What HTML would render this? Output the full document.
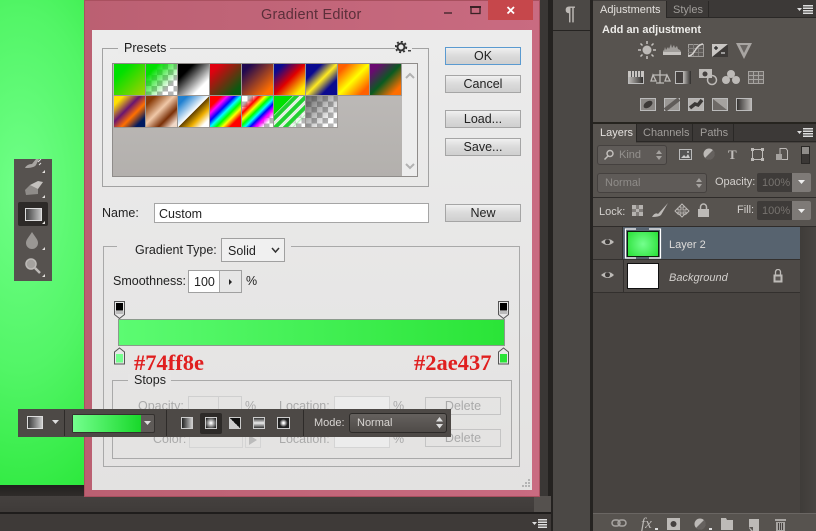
<!DOCTYPE html>
<html><head><meta charset="utf-8">
<style>
html,body{margin:0;padding:0;width:816px;height:531px;overflow:hidden;background:#45413f}
body{position:relative;font-family:"Liberation Sans",sans-serif;font-size:12px}
div,span.a{position:absolute;box-sizing:border-box}
.t{position:absolute;white-space:nowrap;line-height:14px}
.d{color:#222;font-size:12.5px}
.g{color:#aaa;font-size:12.5px}
.btn{background:linear-gradient(#f0f0f0,#dcdcdc 45%,#cfcfcf);border:1px solid #a5a5a5;color:#222;text-align:center;font-size:12.5px;line-height:16px}
.s{width:32px;height:32px;border-right:1px solid #9b9794;border-bottom:1px solid #9b9794}
.ck{background-image:repeating-conic-gradient(#b4b4b4 0 25%,#fff 0 50%);background-size:11px 11px}
.l{color:#a3a09c;font-size:11px}
</style></head><body>

<!-- canvas -->
<div style="left:0;top:0;width:84px;height:485px;background:radial-gradient(ellipse 150px 330px at 20px 190px,#70ff88 0%,#52f566 55%,#2ce83c 100%)"></div>
<div style="left:0;top:485px;width:551px;height:11px;background:linear-gradient(#211f1d,#2f2c2a)"></div>
<div style="left:0;top:496px;width:551px;height:17px;background:linear-gradient(#45413f,#3f3b39)"></div>
<div style="left:0;top:512px;width:551px;height:2px;background:#1f1d1c"></div>
<div style="left:0;top:514px;width:551px;height:17px;background:#3e3a38"></div>
<svg style="position:absolute;left:532px;top:519px" width="15" height="9" fill="#ddd"><path d="M0 3h5L2.500 6zM6 0h9v1.500H6zM6 2.500h9V4H6zM6 5h9v1.500H6zM6 7.500h9V9H6z"/></svg>

<!-- right-of-dialog strips -->
<div style="left:540px;top:0;width:8px;height:497px;background:#3a3735"></div>
<div style="left:534px;top:496px;width:17px;height:16px;background:#55514e"></div>
<div style="left:548px;top:0;width:5px;height:496px;background:#242220"></div>
<div style="left:551px;top:496px;width:2px;height:35px;background:#242220"></div>
<div style="left:553px;top:0;width:37px;height:531px;background:#4b4845"></div>
<div style="left:553px;top:30px;width:37px;height:1px;background:#262422"></div>
<div style="left:590px;top:0;width:3px;height:531px;background:#252321"></div>
<span class="t" style="left:565px;top:5px;font-size:19px;line-height:20px;color:#bdb9b5;font-weight:bold">¶</span>

<!-- dialog -->
<div style="left:84px;top:0;width:456px;height:497px;background:linear-gradient(90deg,#bb6072,#c96b81);box-shadow:inset 0 0 0 1px #a9505f"></div>
<div style="left:488px;top:0;width:45px;height:20px;background:#c6474b"></div>
<svg style="position:absolute;left:440px;top:0" width="92" height="20"><rect x="4" y="12" width="8" height="2" fill="#6b3a45"/><rect x="31" y="7" width="9" height="6.500" fill="none" stroke="#3a2226" stroke-width="1.300"/><rect x="30" y="6" width="11" height="2" fill="#3a2226"/><path d="M67.500 7l6.500 6.500m0-6.500l-6.500 6.500" stroke="#fff" stroke-width="1.800"/></svg>
<span class="t" style="left:261px;top:8px;font-size:14.5px;color:#5b2f3a;letter-spacing:.2px">Gradient Editor</span>
<div style="left:92px;top:30px;width:440px;height:460px;background:linear-gradient(#ececec,#e3e2e1)"></div>
<svg style="position:absolute;left:520px;top:478px" width="12" height="12" fill="#b4b4b4"><rect x="8" y="1" width="2" height="2"/><rect x="5" y="4" width="2" height="2"/><rect x="8" y="4" width="2" height="2"/><rect x="2" y="7" width="2" height="2"/><rect x="5" y="7" width="2" height="2"/><rect x="8" y="7" width="2" height="2"/></svg>

<!-- presets group -->
<div style="left:102px;top:48px;width:327px;height:139px;border:1px solid #a2a2a2"></div>
<div style="left:118px;top:42px;width:52px;height:12px;background:#ebebeb"></div>
<div style="left:395px;top:42px;width:17px;height:12px;background:#ebebeb"></div>
<span class="t d" style="left:124px;top:41px;color:#1a1a1a">Presets</span>
<svg style="position:absolute;left:395px;top:41px" width="18" height="13"><circle cx="6" cy="6" r="3.500" fill="none" stroke="#333" stroke-width="2"/><circle cx="6" cy="6" r="5.300" fill="none" stroke="#333" stroke-width="1.800" stroke-dasharray="2 2.100"/><rect x="13" y="9" width="3" height="1.500" fill="#444"/></svg>
<div style="left:112px;top:63px;width:306px;height:114px;border:1px solid #8f8c8a;background:#ededed"></div>
<div style="left:113px;top:64px;width:289px;height:112px;background:linear-gradient(#bfbcba,#b3b0ad)"></div>
<svg style="position:absolute;left:402px;top:64px" width="16" height="112" fill="none" stroke="#b2b2b2" stroke-width="2"><path d="M4 14l4-4 4 4M4 100l4 4 4-4"/></svg>

<div class="s" style="left:114px;top:64px;background:linear-gradient(135deg,#00e000 25%,#a8d000)"></div>
<div class="s ck" style="left:146px;top:64px"><div style="inset:0;background:linear-gradient(135deg,#00e000 20%,rgba(0,224,0,0) 75%)"></div></div>
<div class="s" style="left:178px;top:64px;background:linear-gradient(135deg,#000 25%,#fff 75%)"></div>
<div class="s" style="left:210px;top:64px;background:linear-gradient(135deg,#e00010 15%,#0a5a10 85%)"></div>
<div class="s" style="left:242px;top:64px;background:linear-gradient(135deg,#200850 15%,#ff6e00 85%)"></div>
<div class="s" style="left:274px;top:64px;background:linear-gradient(135deg,#0a0a90 15%,#e00000 50%,#ffea00 85%)"></div>
<div class="s" style="left:306px;top:64px;background:linear-gradient(135deg,#0a0a90 25%,#ffea20 50%,#0a0a90 75%)"></div>
<div class="s" style="left:338px;top:64px;background:linear-gradient(135deg,#ff6000 15%,#ffff00 50%,#ff6000 85%)"></div>
<div class="s" style="left:370px;top:64px;background:linear-gradient(135deg,#6a0a70 15%,#0a5a20 50%,#ff6e00 85%)"></div>

<div class="s" style="left:114px;top:96px;background:linear-gradient(135deg,#ffe000 15%,#6a1570 42%,#ff7000 62%,#001a60 85%)"></div>
<div class="s" style="left:146px;top:96px;background:linear-gradient(135deg,#8a3c08 15%,#f0c8a8 45%,#7a3008 70%,#f0d8c8 90%)"></div>
<div class="s" style="left:178px;top:96px;background:linear-gradient(135deg,#2080d0 15%,#fff 50%,#604000 51%,#f0b000 70%,#fff 88%)"></div>
<div class="s" style="left:210px;top:96px;background:linear-gradient(135deg,#f00 18%,#f0f 28%,#00f 40%,#0ff 50%,#0f0 60%,#ff0 70%,#f00 82%)"></div>
<div class="s ck" style="left:242px;top:96px"><div style="inset:0;background:linear-gradient(135deg,rgba(255,0,0,0) 15%,#f00 28%,#ff0 38%,#0f0 47%,#0ff 55%,#00f 63%,#f0f 72%,rgba(255,0,255,0) 85%)"></div></div>
<div class="s ck" style="left:274px;top:96px"><div style="inset:0;background:repeating-linear-gradient(135deg,#20d030 0 4px,#e0f0e0 4px 7px);-webkit-mask-image:linear-gradient(135deg,#000 70%,transparent 85%)"></div><div style="inset:0;background:linear-gradient(135deg,#00e000 30%,rgba(0,224,0,0) 31%)"></div></div>
<div class="s ck" style="left:306px;top:96px"><div style="inset:0;background:linear-gradient(135deg,rgba(70,70,70,.85),rgba(70,70,70,0) 80%)"></div></div>

<!-- buttons -->
<div class="btn" style="left:445px;top:47px;width:76px;height:18px;border-color:#5a9ad0">OK</div>
<div class="btn" style="left:445px;top:75px;width:76px;height:18px">Cancel</div>
<div class="btn" style="left:445px;top:110px;width:76px;height:18px">Load...</div>
<div class="btn" style="left:445px;top:138px;width:76px;height:18px">Save...</div>
<div class="btn" style="left:445px;top:204px;width:76px;height:18px">New</div>

<!-- name -->
<span class="t d" style="left:102px;top:206px">Name:</span>
<div style="left:154px;top:203px;width:275px;height:20px;background:#fff;border:1px solid #a5a5a5"></div>
<span class="t d" style="left:159px;top:207px">Custom</span>

<!-- gradient type group -->
<div style="left:103px;top:246px;width:417px;height:221px;border:1px solid #a9a9a9"></div>
<div style="left:117px;top:240px;width:174px;height:14px;background:#e8e7e7"></div>
<span class="t d" style="left:135px;top:243px">Gradient Type:</span>
<div style="left:221px;top:238px;width:64px;height:24px;background:#f0f0f0;border:1px solid #a0a0a0"></div>
<span class="t d" style="left:228px;top:244px">Solid</span>
<svg style="position:absolute;left:271px;top:247px" width="10" height="7" fill="none" stroke="#333" stroke-width="1.500"><path d="M1 1l3.500 4 3.500-4"/></svg>
<span class="t d" style="left:113px;top:274px">Smoothness:</span>
<div style="left:188px;top:270px;width:54px;height:23px;background:#fff;border:1px solid #a0a0a0"></div>
<div style="left:219px;top:271px;width:22px;height:21px;background:#e6e6e6;border-left:1px solid #a8a8a8"></div>
<span class="t d" style="left:194px;top:275px">100</span>
<svg style="position:absolute;left:228px;top:278px" width="6" height="8"><path d="M1 1l3 3-3 3z" fill="#222"/></svg>
<span class="t d" style="left:246px;top:274px">%</span>

<!-- gradient bar -->
<div style="left:118px;top:319px;width:387px;height:27px;background:linear-gradient(90deg,#5cfb72,#2ae437);border:1px solid #8b9a8c"></div>
<svg style="position:absolute;left:114px;top:301px" width="12" height="19"><path d="M.5.5h10v13l-5 4-5-4z" fill="#e8e8e8" stroke="#555"/><rect x="2" y="2" width="7" height="7.500" fill="#000"/><rect x="1.500" y="10" width="8" height="3" fill="#bbb"/></svg>
<svg style="position:absolute;left:498px;top:301px" width="12" height="19"><path d="M.5.5h10v13l-5 4-5-4z" fill="#e8e8e8" stroke="#555"/><rect x="2" y="2" width="7" height="7.500" fill="#000"/><rect x="1.500" y="10" width="8" height="3" fill="#bbb"/></svg>
<svg style="position:absolute;left:114px;top:347px" width="12" height="18"><path d="M.5 17V5l5-4 5 4v12z" fill="#e8e8e8" stroke="#555"/><rect x="2" y="7" width="7" height="8.500" fill="#74ff8e"/></svg>
<svg style="position:absolute;left:498px;top:347px" width="12" height="18"><path d="M.5 17V5l5-4 5 4v12z" fill="#e8e8e8" stroke="#555"/><rect x="2" y="7" width="7" height="8.500" fill="#2ae437"/></svg>

<!-- stops -->
<div style="left:112px;top:380px;width:400px;height:79px;border:1px solid #a9a9a9"></div>
<div style="left:128px;top:374px;width:43px;height:12px;background:#e6e5e5"></div>
<span class="t d" style="left:134px;top:373px">Stops</span>
<span class="t g" style="left:138px;top:399px">Opacity:</span>
<div style="left:188px;top:396px;width:54px;height:22px;border:1px solid #cfcfcf"></div>
<div style="left:218px;top:396px;width:1px;height:22px;background:#d0d0d0"></div>
<span class="t g" style="left:245px;top:399px">%</span>
<span class="t g" style="left:279px;top:399px">Location:</span>
<div style="left:334px;top:396px;width:56px;height:20px;border:1px solid #d4d4d4;background:#ececec"></div>
<span class="t g" style="left:393px;top:399px">%</span>
<div style="left:425px;top:397px;width:76px;height:18px;border:1px solid #c4c4c4;color:#aaa;text-align:center;font-size:12.5px;line-height:17px">Delete</div>
<span class="t g" style="left:153px;top:432px">Color:</span>
<div style="left:189px;top:428px;width:54px;height:20px;border:1px solid #d4d4d4"></div>
<div style="left:245px;top:428px;width:16px;height:20px;border:1px solid #d4d4d4"></div>
<svg style="position:absolute;left:248px;top:434px" width="10" height="12"><path d="M1 1l8 5-8 5z" fill="#bbb"/></svg>
<span class="t g" style="left:279px;top:432px">Location:</span>
<div style="left:334px;top:428px;width:56px;height:20px;border:1px solid #d4d4d4;background:#ececec"></div>
<span class="t g" style="left:393px;top:432px">%</span>
<div style="left:425px;top:429px;width:76px;height:18px;border:1px solid #c4c4c4;color:#aaa;text-align:center;font-size:12.5px;line-height:17px">Delete</div>

<!-- red labels -->
<span class="t" style="left:134px;top:350px;font:bold 22.5px/26px 'Liberation Serif',serif;color:#e01f1f">#74ff8e</span>
<span class="t" style="left:414px;top:350px;font:bold 22.5px/26px 'Liberation Serif',serif;color:#e01f1f">#2ae437</span>

<!-- left tools -->
<div style="left:14px;top:159px;width:38px;height:122px;background:#56524f"></div>
<div style="left:18px;top:202px;width:30px;height:24px;background:#2d2a28;border-radius:2px"></div>
<svg style="position:absolute;left:14px;top:159px" width="38" height="122">
<defs><linearGradient id="lg" x1="0" x2="1"><stop offset="0" stop-color="#3a3a3a"/><stop offset="1" stop-color="#c8c8c8"/></linearGradient></defs>
<path d="M11 9q2-4 7-4l4-5h3l-3 6q-2 3-11 3z" fill="#a8a5a2"/><path d="M24 3l3-3M25 6l2-2" stroke="#ddd"/>
<path d="M16 26l8-4 5 1-5 7-8 1z" fill="#c4c1be"/>
<path d="M11 31l5-5 8 4v5l-12 1z" fill="#8f8c89"/>
<rect x="11.500" y="49.500" width="16" height="12" fill="url(#lg)" stroke="#ddd" stroke-width="1"/>
<path d="M18 73c-4 6-6 8-6 11a6 6 0 0 0 12 0c0-3-2-5-6-11z" fill="#9a9794"/>
<circle cx="17" cy="105" r="5" fill="#a5a29f" stroke="#bdbab7" stroke-width="1.500"/><path d="M21 109l5 5" stroke="#bdbab7" stroke-width="2.500"/>
<g fill="#e4e2df"><path d="M31 11v3h-3zM31 36v3h-3zM31 62v3h-3zM31 88v3h-3zM31 115v3h-3z"/></g>
</svg>

<!-- options bar -->
<div style="left:18px;top:409px;width:433px;height:28px;background:#4d4946"></div>
<div style="left:64px;top:410px;width:1px;height:26px;background:#2e2b29"></div>
<div style="left:166px;top:410px;width:1px;height:26px;background:#2e2b29"></div>
<div style="left:303px;top:410px;width:1px;height:26px;background:#2e2b29"></div>
<div style="left:27px;top:416px;width:16px;height:13px;background:linear-gradient(90deg,#3a3a3a,#ccc);border:1px solid #ddd"></div>
<svg style="position:absolute;left:52px;top:420px" width="8" height="5"><path d="M0 0h7l-3.500 4z" fill="#ddd"/></svg>
<div style="left:72px;top:414px;width:83px;height:19px;background:#5e5a57;border:1px solid #34312f;border-radius:2px"></div>
<div style="left:73px;top:415px;width:68px;height:17px;background:linear-gradient(90deg,#74ff8e,#18d82a)"></div>
<svg style="position:absolute;left:144px;top:421px" width="8" height="5"><path d="M0 0h7l-3.500 4z" fill="#ddd"/></svg>
<div style="left:200px;top:413px;width:22px;height:21px;background:#2d2a28;border-radius:2px"></div>
<div style="left:181px;top:417px;width:12px;height:12px;background:linear-gradient(90deg,#222,#ccc);border:1px solid #ccc"></div>
<div style="left:205px;top:417px;width:12px;height:12px;background:radial-gradient(circle,#fff 5%,#222 90%);border:1px solid #ccc"></div>
<div style="left:229px;top:417px;width:12px;height:12px;background:linear-gradient(45deg,#ccc 50%,#111 50%);border:1px solid #ccc"></div>
<div style="left:253px;top:417px;width:12px;height:12px;background:linear-gradient(#333,#eee 50%,#333);border:1px solid #ccc"></div>
<div style="left:277px;top:417px;width:13px;height:12px;background:radial-gradient(circle,#fff 10%,#222 55%);border:1px solid #ccc"></div>
<span class="t" style="left:314px;top:416px;color:#d8d5d2;font-size:11px">Mode:</span>
<div style="left:349px;top:413px;width:98px;height:20px;background:linear-gradient(#65615e,#4f4b48);border:1px solid #2c2a28;border-radius:3px"></div>
<span class="t" style="left:357px;top:416px;color:#d8d5d2;font-size:11px">Normal</span>
<svg style="position:absolute;left:436px;top:417px" width="8" height="12" fill="#ddd"><path d="M0 4.500L3.500 0 7 4.500zM0 7h7l-3.500 4.500z"/></svg>

<!-- right panels -->
<div style="left:593px;top:0;width:223px;height:122px;background:#57534f"></div>
<div style="left:593px;top:0;width:223px;height:18px;background:#3c3937;border-bottom:1px solid #2a2826"></div>
<div style="left:593px;top:1px;width:73px;height:18px;background:#57534f"></div>
<div style="left:666px;top:1px;width:1px;height:17px;background:#2a2826"></div>
<div style="left:708px;top:1px;width:1px;height:17px;background:#2a2826"></div>
<span class="t" style="left:600px;top:3px;font-size:11px;color:#e4e1de">Adjustments</span>
<span class="t" style="left:673px;top:3px;font-size:11px;color:#a09d9a">Styles</span>
<svg style="position:absolute;left:797px;top:5px" width="16" height="9" fill="#ddd"><path d="M0 3h5L2.500 6zM6 0h10v1.500H6zM6 2.500h10V4H6zM6 5h10v1.500H6zM6 7.500h10V9H6z"/></svg>
<span class="t" style="left:602px;top:23px;font-size:11px;color:#ecebe8;font-weight:bold">Add an adjustment</span>

<svg style="position:absolute;left:593px;top:0" width="223" height="122">
<defs><linearGradient id="gg" x1="0" x2="1"><stop offset="0" stop-color="#2f2d2b"/><stop offset="1" stop-color="#bdbab7"/></linearGradient>
<linearGradient id="gr" x1="0" x2="1"><stop offset="0" stop-color="#bdbab7"/><stop offset="1" stop-color="#2f2d2b"/></linearGradient></defs>
<!-- row1 -->
<g transform="translate(54,50)"><circle r="4.500" fill="#bdbab7"/><path d="M0-9v3M0 6v3M-9 0h3M6 0h3M-6.500-6.500l2 2M4.500 4.500l2 2M6.500-6.500l-2 2M-4.500 4.500l-2 2" stroke="#c5c2bf" stroke-width="1.500"/></g>
<path d="M70 55v-5l1 1 1-4 1 3 2-3 1 2 2-5 1 4 2-3 1 3 2-2 1 3 2 1 1 2v3z" fill="#a09d9a"/><rect x="70" y="52" width="18" height="3" fill="#c5c2bf"/>
<g transform="translate(95,44)"><rect x=".5" y=".5" width="15" height="12" fill="#5f5b58" stroke="#a09d9a"/><path d="M5.500 0v12M10.500 0v12M0 4.500h15M0 8.500h15" stroke="#807d7a"/><path d="M0 12c7 0 7-11 15-12" stroke="#d5d2cf" fill="none" stroke-width="1.500"/></g>
<g transform="translate(119,44)"><rect width="16" height="13" fill="#c9c6c3"/><path d="M0 13L16 0v13z" fill="#3c3937"/><path d="M2 4h4M4 2v4" stroke="#222" stroke-width="1.200"/><path d="M9 9h4" stroke="#ddd" stroke-width="1.200"/></g>
<path d="M143 43h16l-8 16z" fill="#a8a5a2"/><path d="M147 45h8l-4 8z" fill="#6a6663"/>
<!-- row2 -->
<g transform="translate(35,71)"><rect x=".5" y=".5" width="15" height="12" fill="url(#gr)" stroke="#bbb"/><rect y="0" width="16" height="6" fill="#c8c5c2"/><path d="M3.500 0v6M6.500 0v6M9.500 0v6M12.500 0v6" stroke="#555"/></g>
<g transform="translate(60,70)" fill="none" stroke="#bdbab7" stroke-width="1.300"><path d="M7 0v13M0 5h14M0 5l-2 6h5zM14 5l-2 6h5zM3 13h8"/></g>
<g transform="translate(82,71)"><rect x=".5" y=".5" width="15" height="12" fill="#45413f" stroke="#bbb"/><rect x="8" width="8" height="13" fill="url(#gr)"/></g>
<g transform="translate(106,69)"><rect width="13" height="9" fill="#bdbab7"/><circle cx="6" cy="5" r="2.500" fill="#45413f"/><circle cx="13" cy="11" r="4.500" fill="none" stroke="#bdbab7" stroke-width="1.500"/></g>
<g transform="translate(138,77)" fill="#bdbab7"><circle cy="-3" r="4"/><circle cx="-5" cy="3" r="4"/><circle cx="5" cy="3" r="4"/></g>
<g transform="translate(155,71)"><rect x=".5" y=".5" width="15" height="12" fill="#6a6663" stroke="#a5a29f"/><path d="M5.500 0v12M10.500 0v12M0 4.500h15M0 8.500h15" stroke="#a5a29f"/></g>
<!-- row3 -->
<g transform="translate(47,98)"><rect x=".5" y=".5" width="15" height="12" fill="#8a8784" stroke="#bbb"/><ellipse cx="8" cy="6.500" rx="5" ry="3" fill="#3c3937" transform="rotate(-35 8 6.500)"/></g>
<g transform="translate(71,98)"><rect x=".5" y=".5" width="15" height="12" fill="#9a9794" stroke="#bbb"/><path d="M1 12L15 1" stroke="#605c59" stroke-width="4"/></g>
<g transform="translate(95,98)"><rect x=".5" y=".5" width="15" height="12" fill="#b5b2af" stroke="#bbb"/><path d="M2 10l5-4 3 1 4-5" stroke="#3c3937" stroke-width="3.500" fill="none"/></g>
<g transform="translate(119,98)"><rect x=".5" y=".5" width="15" height="12" fill="#a5a29f" stroke="#bbb"/><path d="M1 1l14 11H1zM15 1L1 12" fill="#6d6966"/></g>
<rect x="143.500" y="98.500" width="15" height="12" fill="url(#gg)" stroke="#bbb"/>
</svg>

<div style="left:593px;top:122px;width:223px;height:2px;background:#26241f"></div>
<div style="left:593px;top:124px;width:223px;height:389px;background:#474340"></div>
<div style="left:593px;top:124px;width:223px;height:18px;background:#3c3937;border-bottom:1px solid #2a2826"></div>
<div style="left:593px;top:124px;width:43px;height:19px;background:#57534f"></div>
<div style="left:636px;top:124px;width:1px;height:18px;background:#2a2826"></div>
<div style="left:692px;top:124px;width:1px;height:18px;background:#2a2826"></div>
<div style="left:733px;top:124px;width:1px;height:18px;background:#2a2826"></div>
<span class="t" style="left:600px;top:126px;font-size:11px;color:#e4e1de">Layers</span>
<span class="t" style="left:643px;top:126px;font-size:11px;color:#a09d9a">Channels</span>
<span class="t" style="left:700px;top:126px;font-size:11px;color:#a09d9a">Paths</span>
<svg style="position:absolute;left:797px;top:128px" width="16" height="9" fill="#ddd"><path d="M0 3h5L2.500 6zM6 0h10v1.500H6zM6 2.500h10V4H6zM6 5h10v1.500H6zM6 7.500h10V9H6z"/></svg>

<div style="left:593px;top:143px;width:223px;height:54px;background:#57534f"></div>
<div style="left:597px;top:145px;width:70px;height:20px;background:#5f5b58;border:1px solid #45413f;border-radius:3px"></div>
<svg style="position:absolute;left:603px;top:149px" width="12" height="12" fill="none" stroke="#c0bdba" stroke-width="1.500"><circle cx="7" cy="4.500" r="3"/><path d="M5 7l-3.500 3.500"/></svg>
<span class="t l" style="left:619px;top:148px;color:#94918e">Kind</span>
<svg style="position:absolute;left:656px;top:150px" width="7" height="11" fill="#a5a29f"><path d="M0 4L3 0l3 4zM0 6h6l-3 4z"/></svg>
<svg style="position:absolute;left:593px;top:143px" width="223" height="24">
<g transform="translate(86,6)"><rect x=".5" y=".5" width="12" height="10" fill="#555" stroke="#bbb"/><path d="M2 9l3-3 2 2 2-3 2 4z" fill="#ccc"/><circle cx="9" cy="3" r="1" fill="#ccc"/></g>
<g transform="translate(116,11)"><circle r="5.500" fill="#bdbab7"/><path d="M-4 4a5.500 5.500 0 0 0 8-8z" fill="#65615e"/></g>
<text x="135" y="16" font-family="Liberation Serif" font-weight="bold" font-size="13" fill="#c0bdba">T</text>
<g transform="translate(159,6)" fill="#bdbab7"><rect x=".5" y=".5" width="10" height="10" fill="none" stroke="#bdbab7"/><rect x="-1" y="-1" width="3" height="3"/><rect x="9" y="-1" width="3" height="3"/><rect x="-1" y="9" width="3" height="3"/><rect x="9" y="9" width="3" height="3"/></g>
<g transform="translate(183,5)"><rect x="0" y="6" width="6" height="6" fill="#a5a29f"/><path d="M4 6V.5h6l1.500 2V11.500H6" fill="none" stroke="#bdbab7"/></g>
<rect x="208.500" y="3.500" width="8" height="17" fill="#3a3735" stroke="#2a2826"/><rect x="209" y="4" width="7" height="7" fill="#8f8c89"/>
</svg>

<div style="left:597px;top:173px;width:110px;height:20px;background:#5f5b58;border:1px solid #45413f;border-radius:3px"></div>
<span class="t l" style="left:605px;top:176px;color:#8f8c89">Normal</span>
<svg style="position:absolute;left:696px;top:178px" width="7" height="11" fill="#a5a29f"><path d="M0 4L3 0l3 4zM0 6h6l-3 4z"/></svg>
<span class="t" style="left:715px;top:175px;font-size:11px;color:#d3d0cd">Opacity:</span>
<div style="left:757px;top:173px;width:54px;height:19px;background:#3e3b39;border-radius:2px"></div>
<div style="left:792px;top:173px;width:19px;height:19px;background:#7e7a77;border-radius:0 2px 2px 0"></div>
<span class="t" style="left:762px;top:176px;font-size:11px;color:#77736f">100%</span>
<svg style="position:absolute;left:798px;top:180px" width="7" height="4"><path d="M0 0h7L3.500 4z" fill="#eee"/></svg>
<div style="left:593px;top:197px;width:223px;height:1px;background:#2f2c2a"></div>

<div style="left:593px;top:198px;width:223px;height:29px;background:#57534f"></div>
<span class="t" style="left:599px;top:205px;font-size:11px;color:#d3d0cd">Lock:</span>
<svg style="position:absolute;left:630px;top:203px" width="90" height="20">
<g transform="translate(0,1)" fill="#b5b2af"><rect x="2" y="1" width="11" height="11" fill="#807c79"/><path d="M2 1h4v4H2zM9 1h4v4H9zM6 5h3v3H6zM2 8h4v4H2zM9 8h4v4H9z"/></g>
<path d="M22 14q3-5 6-3l10-11-7 12q-2 2-9 2z" fill="#bdbab7"/>
<path d="M52 1l3 3h-2v3h3V5l3 3-3 3V9h-3v2h2l-3 3-3-3h2V9h-3v2l-3-3 3-3v2h3V4h-2z" fill="none" stroke="#bdbab7"/>
<rect x="68" y="6" width="11" height="8" fill="#bdbab7"/><path d="M70.500 6V4a3 3 0 0 1 6 0V6" fill="none" stroke="#bdbab7" stroke-width="1.500"/>
</svg>
<span class="t" style="left:737px;top:203px;font-size:11px;color:#d3d0cd">Fill:</span>
<div style="left:757px;top:201px;width:54px;height:19px;background:#3e3b39;border-radius:2px"></div>
<div style="left:792px;top:201px;width:19px;height:19px;background:#7e7a77;border-radius:0 2px 2px 0"></div>
<span class="t" style="left:762px;top:204px;font-size:11px;color:#77736f">100%</span>
<svg style="position:absolute;left:798px;top:209px" width="7" height="4"><path d="M0 0h7L3.500 4z" fill="#eee"/></svg>
<div style="left:593px;top:226px;width:223px;height:1px;background:#2f2c2a"></div>

<!-- layers rows -->
<div style="left:800px;top:227px;width:16px;height:286px;background:linear-gradient(90deg,#3f3c39,#484441)"></div>
<div style="left:593px;top:227px;width:207px;height:33px;background:#57636f;border-bottom:1px solid #33302e"></div>
<div style="left:593px;top:227px;width:30px;height:33px;background:#4d4946;border-bottom:1px solid #33302e;border-right:1px solid #33302e"></div>
<div style="left:593px;top:260px;width:207px;height:33px;background:#4d4946;border-bottom:1px solid #33302e"></div>
<div style="left:623px;top:260px;width:1px;height:33px;background:#33302e"></div>
<svg style="position:absolute;left:601px;top:238px" width="14" height="10"><path d="M0 4q7-6 13 0-6 6-13 0z" fill="#bdbab7"/><circle cx="6.500" cy="3.800" r="2.500" fill="#3c3937"/></svg>
<svg style="position:absolute;left:601px;top:271px" width="14" height="10"><path d="M0 4q7-6 13 0-6 6-13 0z" fill="#bdbab7"/><circle cx="6.500" cy="3.800" r="2.500" fill="#3c3937"/></svg>
<div style="left:627px;top:231px;width:32px;height:26px;background:radial-gradient(circle,#74ff8e,#28e036);border:1px solid #0c1c0c"></div>
<svg style="position:absolute;left:624px;top:227px" width="38" height="33" fill="none" stroke="#fff" stroke-width="1.200"><path d="M12 2H1.500V31H12M25 2H36.500V31H25"/></svg>
<span class="t" style="left:669px;top:238px;font-size:11px;color:#dedcda">Layer 2</span>
<div style="left:627px;top:263px;width:32px;height:26px;background:#fff;border:1px solid #111"></div>
<span class="t" style="left:669px;top:271px;font-size:11px;color:#d3d0cd;font-style:italic">Background</span>
<svg style="position:absolute;left:772px;top:269px" width="12" height="14"><rect x="1.500" y="5.500" width="9" height="8" fill="#bdbab7"/><path d="M3.500 5.500V3a2.500 2.500 0 0 1 5 0v2.500" fill="none" stroke="#bdbab7" stroke-width="1.300"/><rect x="3.500" y="7.500" width="5" height="4" fill="#5c5855"/></svg>

<!-- bottom bar -->
<div style="left:593px;top:513px;width:223px;height:18px;background:#57534f;border-top:1px solid #6a6663"></div>
<svg style="position:absolute;left:593px;top:513px" width="223" height="18">
<g transform="translate(0,4)">
<rect x="19" y="3" width="8" height="6" rx="3" fill="none" stroke="#a8a5a2" stroke-width="1.500"/><rect x="25" y="3" width="8" height="6" rx="3" fill="none" stroke="#a8a5a2" stroke-width="1.500"/>
<text x="48" y="11" font-family="Liberation Serif" font-style="italic" font-size="15" fill="#bdbab7">fx</text><rect x="62" y="11" width="3" height="2" fill="#ddd"/>
<rect x="74" y="1" width="13" height="12" fill="#bdbab7"/><circle cx="80.500" cy="7" r="3" fill="#45413f"/>
<circle cx="107" cy="7" r="5.500" fill="#bdbab7"/><path d="M103 11a5.500 5.500 0 0 0 8-8z" fill="#65615e"/><rect x="116" y="11" width="3" height="2" fill="#ddd"/>
<path d="M128 1h5l1 2h6v10h-12z" fill="#bdbab7"/>
<path d="M156 2h10v12h-8l-2-3z" fill="#bdbab7"/><path d="M156 10h4v4z" fill="#5a5653"/>
<path d="M182 2h11v2h-11zM183 5h9v9h-9z" fill="#a8a5a2"/><path d="M185.500 6v7M187.500 6v7M189.500 6v7" stroke="#45413f"/>
</g>
</svg>
</body></html>
